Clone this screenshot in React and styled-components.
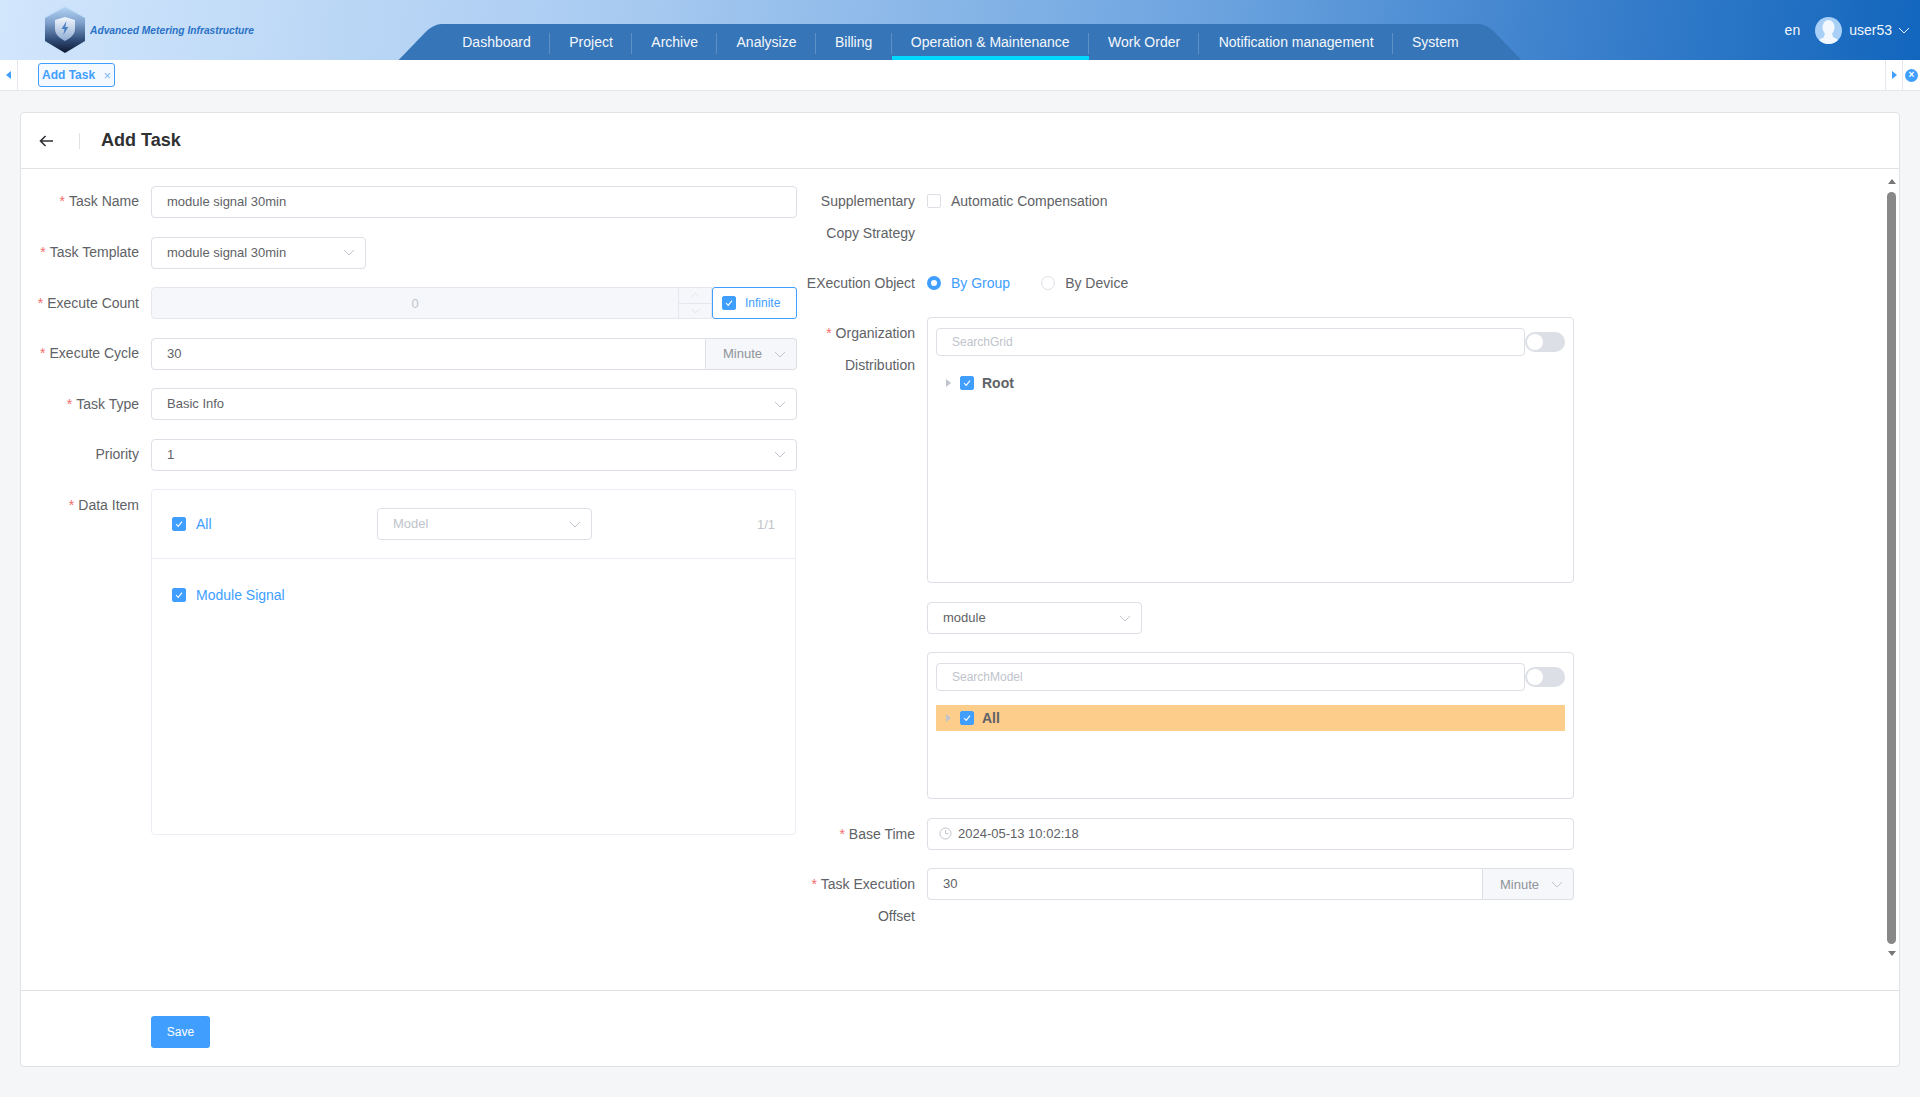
import React from "react";
import styled, { createGlobalStyle } from "styled-components";

const GlobalStyle = createGlobalStyle`
  html, body {
    margin: 0;
    padding: 0;
    background: #f5f6f8;
    font-family: "Liberation Sans", Arial, sans-serif;
  }
  * {
    box-sizing: border-box;
  }
`;

const Page = styled.div`
  width: 1920px;
  height: 1097px;
  display: flex;
  flex-direction: column;
  overflow: hidden;
`;

const Header = styled.header`
  height: 60px;
  flex: none;
  display: flex;
  align-items: flex-end;
  padding-left: 43px;
  background: linear-gradient(98deg, #d2e6fc 0%, #a9cbf1 32%, #6ea5e0 62%, #3b80cc 82%, #1266bd 100%);
`;

const Brand = styled.div`
  width: 381px;
  height: 60px;
  display: flex;
  align-items: center;
  gap: 3px;
`;

const BrandText = styled.span`
  font-size: 10.25px;
  font-weight: 700;
  font-style: italic;
  color: #2a72c6;
  white-space: nowrap;
`;

const Nav = styled.nav`
  position: relative;
  isolation: isolate;
  height: 36px;
  display: flex;
  padding: 0 18px 0 19px;
  &::before,
  &::after {
    content: "";
    position: absolute;
    z-index: -1;
    top: 0;
    bottom: 0;
    width: 55%;
    background: #3675b8;
  }
  &::before {
    left: -8.5px;
    transform: skewX(-44deg);
    border-top-left-radius: 8px;
  }
  &::after {
    right: -8px;
    transform: skewX(44deg);
    border-top-right-radius: 8px;
  }
`;

const NavItem = styled.a`
  position: relative;
  display: flex;
  align-items: center;
  height: 36px;
  padding: ${(p) => (p.$active ? "4px" : "0")} 19.25px 0;
  font-size: 14px;
  color: #f4f8fc;
  white-space: nowrap;
  border-bottom: ${(p) => (p.$active ? "4px solid #00d8ff" : "0")};
  &:not(:last-child)::after {
    content: "";
    position: absolute;
    right: 0;
    top: 9px;
    height: 21px;
    width: 1px;
    background: rgba(255, 255, 255, 0.2);
  }
`;

const UserBox = styled.div`
  margin-left: auto;
  height: 60px;
  display: flex;
  align-items: center;
  padding-right: 10px;
  color: #f2f7fc;
  font-size: 14px;
`;

const Lang = styled.span`
  margin-right: 15px;
`;

const UserName = styled.span`
  margin: 0 6px 0 7px;
`;

const TabBar = styled.div`
  height: 31px;
  flex: none;
  display: flex;
  align-items: center;
  background: #fff;
  border-bottom: 1px solid #e4e7ed;
`;

const TabCell = styled.div`
  width: ${(p) => p.$w || "18px"};
  height: 30px;
  flex: none;
  display: flex;
  align-items: center;
  justify-content: center;
  border-right: ${(p) => (p.$noRight ? "0" : "1px solid #e4e7ed")};
  border-left: ${(p) => (p.$left ? "1px solid #e4e7ed" : "0")};
`;

const Tab = styled.div`
  margin-left: 20px;
  width: 77px;
  height: 24px;
  display: flex;
  align-items: center;
  justify-content: space-between;
  padding: 0 3px 0 3px;
  border: 1px solid #409eff;
  border-radius: 3px;
  background: #f4f9ff;
  color: #409eff;
  font-size: 12px;
  font-weight: 700;
`;

const TabClose = styled.span`
  font-size: 13px;
  font-weight: 400;
  color: #79b8f8;
`;

const TabSpacer = styled.div`
  flex: 1;
`;

const Triangle = styled.span`
  width: 0;
  height: 0;
  border-top: 4px solid transparent;
  border-bottom: 4px solid transparent;
  ${(p) =>
    p.$dir === "left"
      ? "border-right: 5px solid #409eff;"
      : `border-left: 5px solid ${p.$color || "#409eff"};`}
`;

const CloseAll = styled.span`
  width: 13px;
  height: 13px;
  border-radius: 50%;
  background: #409eff;
  color: #fff;
  font-size: 10px;
  font-weight: 700;
  line-height: 12px;
  text-align: center;
`;

const Main = styled.main`
  flex: 1;
  min-height: 0;
  display: flex;
  padding: 21px 20px 30px 20px;
`;

const Card = styled.section`
  flex: 1;
  display: flex;
  flex-direction: column;
  background: #fff;
  border: 1px solid #e0e2e6;
  border-radius: 4px;
`;

const CardHead = styled.div`
  height: 56px;
  flex: none;
  display: flex;
  align-items: center;
  padding-left: 18px;
  border-bottom: 1px solid #e0e2e6;
`;

const BackDivider = styled.span`
  width: 1px;
  height: 16px;
  background: #e0e2e6;
  margin: 0 21px 0 26px;
`;

const Title = styled.h1`
  margin: 0;
  font-size: 18px;
  font-weight: 700;
  color: #303133;
`;

const CardBody = styled.div`
  flex: 1;
  min-height: 0;
  display: flex;
`;

const Column = styled.div`
  flex: none;
  width: ${(p) => p.$w};
  margin-left: ${(p) => p.$ml || "0"};
  padding-top: 17px;
`;

const Field = styled.div`
  display: flex;
  margin-bottom: ${(p) => p.$mb || "18.5px"};
`;

const Label = styled.label`
  width: 119px;
  flex: none;
  margin: ${(p) => p.$top || "-0.5px"} 12px 0 0;
  text-align: right;
  font-size: 14px;
  line-height: 32px;
  color: #606266;
`;

const Star = styled.span`
  color: #f56c6c;
  margin-right: 4px;
`;

const Control = styled.div`
  width: ${(p) => p.$w || "646px"};
  flex: none;
  display: flex;
  align-items: flex-start;
`;

const Input = styled.div`
  flex: 1;
  height: 32px;
  display: flex;
  align-items: center;
  padding: 0 0 1px 15px;
  border: 1px solid #dcdfe6;
  border-radius: ${(p) => p.$radius || "4px"};
  background: #fff;
  font-size: 13px;
  color: #606266;
`;

const SelectBox = styled.div`
  width: ${(p) => p.$w || "100%"};
  height: 32px;
  display: flex;
  align-items: center;
  justify-content: space-between;
  padding: 0 10px 1px 15px;
  border: 1px solid #dcdfe6;
  border-radius: 4px;
  background: #fff;
  font-size: 13px;
  color: ${(p) => (p.$muted ? "#c0c4cc" : "#606266")};
`;

const DisabledNumber = styled.div`
  flex: 1;
  height: 32px;
  display: flex;
  align-items: stretch;
  border: 1px solid #e4e7ed;
  border-radius: 4px 0 0 4px;
  background: #f5f7fa;
  font-size: 13px;
  color: #c0c4cc;
`;

const NumberValue = styled.div`
  flex: 1;
  display: flex;
  align-items: center;
  justify-content: center;
`;

const Stepper = styled.div`
  width: 33px;
  display: flex;
  flex-direction: column;
  border-left: 1px solid #e4e7ed;
`;

const StepButton = styled.div`
  flex: 1;
  display: flex;
  align-items: center;
  justify-content: center;
  & + & {
    border-top: 1px solid #e4e7ed;
  }
`;

const InfiniteBox = styled.div`
  width: 85px;
  height: 32px;
  flex: none;
  display: flex;
  align-items: center;
  gap: 9px;
  padding-left: 9px;
  border: 1px solid #409eff;
  border-radius: 3px;
  font-size: 12px;
  color: #409eff;
`;

const Addon = styled.div`
  width: 91px;
  height: 32px;
  flex: none;
  display: flex;
  align-items: center;
  justify-content: space-between;
  padding: 0 10px 0 17px;
  background: #f5f7fa;
  border: 1px solid #dcdfe6;
  border-left: 0;
  border-radius: 0 4px 4px 0;
  font-size: 13px;
  color: #909399;
`;

const Check = styled.span`
  width: 14px;
  height: 14px;
  flex: none;
  display: flex;
  align-items: center;
  justify-content: center;
  border-radius: 2px;
  background: ${(p) => (p.$on ? "#409eff" : "#fff")};
  border: 1px solid ${(p) => (p.$on ? "#409eff" : "#dcdfe6")};
`;

const ItemPanel = styled.div`
  width: 646px;
  height: 346px;
  border: 1px solid #ebeef5;
  border-radius: 4px;
`;

const PanelHead = styled.div`
  height: 69px;
  display: grid;
  grid-template-columns: 205px 215px 1fr;
  align-items: center;
  padding: 0 20px 0 20px;
  border-bottom: 1px solid #ebeef5;
`;

const CheckLine = styled.div`
  display: flex;
  align-items: center;
  gap: 10px;
  font-size: 14px;
  color: #409eff;
`;

const Count = styled.span`
  text-align: right;
  font-size: 13px;
  color: #c0c4cc;
`;

const PanelBody = styled.div`
  padding: 28px 20px;
`;

const RadioGroup = styled.div`
  display: flex;
  align-items: center;
  gap: 10px;
  height: 32px;
  margin-top: -1px;
  font-size: 14px;
`;

const Radio = styled.span`
  width: 14px;
  height: 14px;
  flex: none;
  border-radius: 50%;
  border: ${(p) => (p.$on ? "4.5px solid #409eff" : "1px solid #dcdfe6")};
  background: #fff;
`;

const RadioText = styled.span`
  color: ${(p) => (p.$on ? "#409eff" : "#606266")};
  margin-right: ${(p) => p.$mr || "0"};
`;

const TreeBox = styled.div`
  width: 647px;
  height: ${(p) => p.$h};
  padding: 10px 8px;
  border: 1px solid #dcdfe6;
  border-radius: 4px;
`;

const SearchRow = styled.div`
  display: flex;
  align-items: center;
`;

const SearchInput = styled.div`
  flex: 1;
  height: 28px;
  display: flex;
  align-items: center;
  padding-left: 15px;
  border: 1px solid #dcdfe6;
  border-radius: 4px;
  font-size: 12px;
  color: #c0c4cc;
`;

const Switch = styled.span`
  width: 40px;
  height: 20px;
  flex: none;
  padding: 2px;
  border-radius: 10px;
  background: #dcdfe6;
`;

const SwitchKnob = styled.span`
  display: block;
  width: 16px;
  height: 16px;
  border-radius: 50%;
  background: #fff;
`;

const TreeRow = styled.div`
  height: 26px;
  margin-top: 14px;
  display: flex;
  align-items: center;
  padding-left: 10px;
  gap: 8.5px;
  background: ${(p) => (p.$hit ? "#fdcd8b" : "transparent")};
  font-size: 14px;
  font-weight: 700;
  color: #606266;
`;

const DateInput = styled(Input)`
  padding-left: 11px;
  gap: 6px;
`;

const ScrollRail = styled.div`
  width: 9px;
  flex: none;
  margin-left: 313px;
  padding-top: 10px;
  display: flex;
  flex-direction: column;
  align-items: center;
`;

const RailArrow = styled.span`
  width: 0;
  height: 0;
  border-left: 4.5px solid transparent;
  border-right: 4.5px solid transparent;
  ${(p) => (p.$down ? "border-top: 5px solid #777;" : "border-bottom: 5px solid #777;")}
`;

const RailThumb = styled.span`
  width: 9px;
  height: 752px;
  margin: 8px 0 7px;
  border-radius: 5px;
  background: #888;
`;

const CardFoot = styled.div`
  height: 76px;
  flex: none;
  display: flex;
  align-items: flex-start;
  padding: 25px 0 0 130px;
  border-top: 1px solid #e0e2e6;
`;

const SaveButton = styled.button`
  width: 59px;
  height: 32px;
  padding: 0;
  border: 0;
  border-radius: 3px;
  background: #409eff;
  color: #fff;
  font-family: inherit;
  font-size: 12px;
`;

const Chevron = ({ size = 12, color = "#c0c4cc", up = false }) => (
  <svg width={size} height={size} viewBox="0 0 12 12" fill="none">
    <path
      d={up ? "M1 8l5-5 5 5" : "M1 4l5 5 5-5"}
      stroke={color}
      strokeWidth="1"
    />
  </svg>
);

const Tick = () => (
  <svg width="10" height="10" viewBox="0 0 10 10" fill="none">
    <path d="M2 5l2.2 2.4L8 2.6" stroke="#fff" strokeWidth="1.1" />
  </svg>
);

const BackArrow = () => (
  <svg width="14" height="12" viewBox="0 0 14 12" fill="none">
    <path d="M14 6H1.5M6.5 1L1.5 6l5 5" stroke="#303133" strokeWidth="1.6" />
  </svg>
);

const ClockIcon = () => (
  <svg width="13" height="13" viewBox="0 0 13 13" fill="none">
    <circle cx="6.5" cy="6.5" r="5.5" stroke="#c0c4cc" />
    <path d="M6.5 3v3.7h3" stroke="#c0c4cc" />
  </svg>
);

const Avatar = () => (
  <svg width="27" height="27" viewBox="0 0 27 27">
    <defs>
      <clipPath id="avatarClip">
        <circle cx="13.5" cy="13.5" r="13.5" />
      </clipPath>
    </defs>
    <g clipPath="url(#avatarClip)">
      <rect width="27" height="27" fill="#a8d0f7" />
      <ellipse cx="13.5" cy="10.5" rx="6" ry="7.5" fill="#f3f8fe" />
      <path d="M10 16h7l1 4 7 4v4H2v-4l7-4z" fill="#f3f8fe" />
    </g>
  </svg>
);

const Logo = () => (
  <svg width="44" height="50" viewBox="0 0 44 50">
    <defs>
      <linearGradient id="hexFill" x1="0" y1="0" x2="0" y2="1">
        <stop offset="0" stopColor="#b4d4f5" />
        <stop offset="0.35" stopColor="#7d9fca" />
        <stop offset="0.7" stopColor="#33507c" />
        <stop offset="1" stopColor="#0d1830" />
      </linearGradient>
      <linearGradient id="shieldFill" x1="0" y1="0" x2="0" y2="1">
        <stop offset="0" stopColor="#f2f7fe" />
        <stop offset="1" stopColor="#8facd2" />
      </linearGradient>
    </defs>
    <path d="M22 0L43 11V37L22 50L1 37V11z" fill="#c6e1fb" opacity="0.7" />
    <path d="M22 2L42 13V36L22 48L2 36V13z" fill="url(#hexFill)" />
    <path d="M22 12l10 3v9c0 5-4 9-10 12-6-3-10-7-10-12v-9z" fill="url(#shieldFill)" />
    <path d="M23.5 16l-5 8h3l-1.2 6 5-8h-3z" fill="#4a7fc0" />
  </svg>
);

const NAV_ITEMS = [
  "Dashboard",
  "Project",
  "Archive",
  "Analysize",
  "Billing",
  "Operation & Maintenance",
  "Work Order",
  "Notification management",
  "System",
];

const Select = ({ value, muted, width }) => (
  <SelectBox $muted={muted} $w={width}>
    {value}
    <Chevron />
  </SelectBox>
);

const RequiredLabel = ({ children, required, top }) => (
  <Label $top={top}>
    {required && <Star>*</Star>}
    {children}
  </Label>
);

const TreeSearch = ({ placeholder }) => (
  <SearchRow>
    <SearchInput>{placeholder}</SearchInput>
    <Switch>
      <SwitchKnob />
    </Switch>
  </SearchRow>
);

const TreeNode = ({ name, hit }) => (
  <TreeRow $hit={hit}>
    <Triangle $color="#c0c4cc" />
    <Check $on>
      <Tick />
    </Check>
    {name}
  </TreeRow>
);

const App = () => (
  <Page>
    <GlobalStyle />
    <Header>
      <Brand>
        <Logo />
        <BrandText>Advanced Metering Infrastructure</BrandText>
      </Brand>
      <Nav>
        {NAV_ITEMS.map((item) => (
          <NavItem key={item} $active={item === "Operation & Maintenance"}>
            {item}
          </NavItem>
        ))}
      </Nav>
      <UserBox>
        <Lang>en</Lang>
        <Avatar />
        <UserName>user53</UserName>
        <Chevron color="#e8f1fb" />
      </UserBox>
    </Header>

    <TabBar>
      <TabCell>
        <Triangle $dir="left" />
      </TabCell>
      <Tab>
        Add Task
        <TabClose>×</TabClose>
      </Tab>
      <TabSpacer />
      <TabCell $left $w="18px">
        <Triangle />
      </TabCell>
      <TabCell $noRight $w="17px">
        <CloseAll>×</CloseAll>
      </TabCell>
    </TabBar>

    <Main>
      <Card>
        <CardHead>
          <BackArrow />
          <BackDivider />
          <Title>Add Task</Title>
        </CardHead>
        <CardBody>
          <Column $w="776px" $ml="-1px">
            <Field>
              <RequiredLabel required top="-1.5px">
                Task Name
              </RequiredLabel>
              <Control>
                <Input>module signal 30min</Input>
              </Control>
            </Field>
            <Field>
              <RequiredLabel required>Task Template</RequiredLabel>
              <Control>
                <Select value="module signal 30min" width="215px" />
              </Control>
            </Field>
            <Field>
              <RequiredLabel required>Execute Count</RequiredLabel>
              <Control>
                <DisabledNumber>
                  <NumberValue>0</NumberValue>
                  <Stepper>
                    <StepButton>
                      <Chevron size={9} color="#dcdfe6" up />
                    </StepButton>
                    <StepButton>
                      <Chevron size={9} color="#dcdfe6" />
                    </StepButton>
                  </Stepper>
                </DisabledNumber>
                <InfiniteBox>
                  <Check $on>
                    <Tick />
                  </Check>
                  Infinite
                </InfiniteBox>
              </Control>
            </Field>
            <Field>
              <RequiredLabel required>Execute Cycle</RequiredLabel>
              <Control>
                <Input $radius="4px 0 0 4px">30</Input>
                <Addon>
                  Minute
                  <Chevron />
                </Addon>
              </Control>
            </Field>
            <Field>
              <RequiredLabel required>Task Type</RequiredLabel>
              <Control>
                <Select value="Basic Info" />
              </Control>
            </Field>
            <Field>
              <RequiredLabel>Priority</RequiredLabel>
              <Control>
                <Select value="1" />
              </Control>
            </Field>
            <Field>
              <RequiredLabel required>Data Item</RequiredLabel>
              <ItemPanel>
                <PanelHead>
                  <CheckLine>
                    <Check $on>
                      <Tick />
                    </Check>
                    All
                  </CheckLine>
                  <Select value="Model" muted />
                  <Count>1/1</Count>
                </PanelHead>
                <PanelBody>
                  <CheckLine>
                    <Check $on>
                      <Tick />
                    </Check>
                    Module Signal
                  </CheckLine>
                </PanelBody>
              </ItemPanel>
            </Field>
          </Column>

          <Column $w="778px">
            <Field $mb="19px">
              <RequiredLabel top="-1.5px">Supplementary Copy Strategy</RequiredLabel>
              <Control $w="647px">
                <RadioGroup>
                  <Check />
                  <RadioText>Automatic Compensation</RadioText>
                </RadioGroup>
              </Control>
            </Field>
            <Field $mb="18px">
              <Label>EXecution Object</Label>
              <Control $w="647px">
                <RadioGroup>
                  <Radio $on />
                  <RadioText $on $mr="21px">
                    By Group
                  </RadioText>
                  <Radio />
                  <RadioText>By Device</RadioText>
                </RadioGroup>
              </Control>
            </Field>
            <Field $mb="19px">
              <RequiredLabel required>Organization Distribution</RequiredLabel>
              <TreeBox $h="266px">
                <TreeSearch placeholder="SearchGrid" />
                <TreeNode name="Root" />
              </TreeBox>
            </Field>
            <Field $mb="18px">
              <Label />
              <Control $w="647px">
                <Select value="module" width="215px" />
              </Control>
            </Field>
            <Field $mb="19px">
              <Label />
              <TreeBox $h="147px">
                <TreeSearch placeholder="SearchModel" />
                <TreeNode name="All" hit />
              </TreeBox>
            </Field>
            <Field $mb="18px">
              <RequiredLabel required>Base Time</RequiredLabel>
              <Control $w="647px">
                <DateInput>
                  <ClockIcon />
                  2024-05-13 10:02:18
                </DateInput>
              </Control>
            </Field>
            <Field>
              <RequiredLabel required>Task Execution Offset</RequiredLabel>
              <Control $w="647px">
                <Input $radius="4px 0 0 4px">30</Input>
                <Addon>
                  Minute
                  <Chevron />
                </Addon>
              </Control>
            </Field>
          </Column>

          <ScrollRail>
            <RailArrow />
            <RailThumb />
            <RailArrow $down />
          </ScrollRail>
        </CardBody>
        <CardFoot>
          <SaveButton>Save</SaveButton>
        </CardFoot>
      </Card>
    </Main>
  </Page>
);

export default App;
